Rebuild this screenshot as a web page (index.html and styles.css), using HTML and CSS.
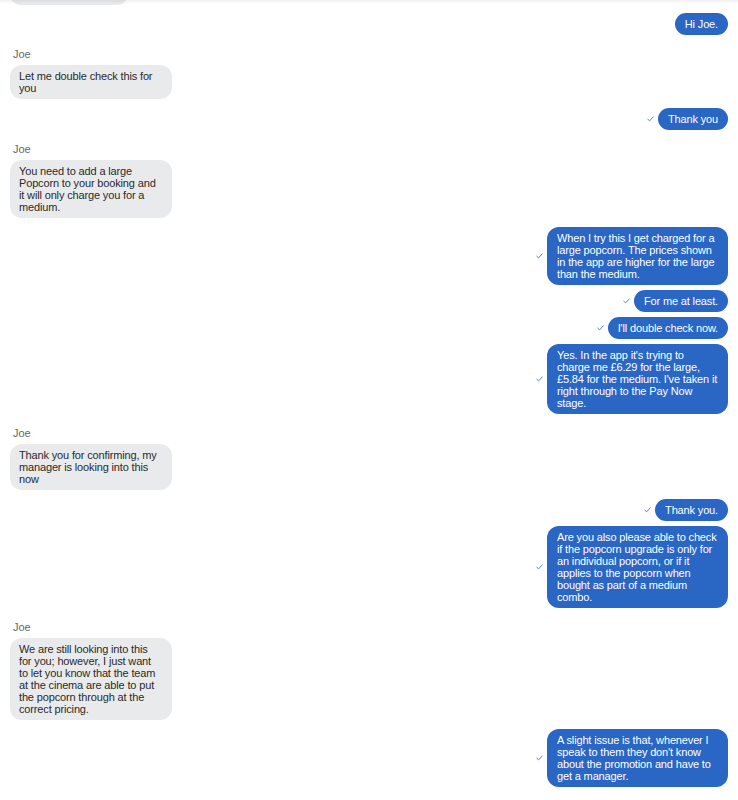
FILE: index.html
```html
<!DOCTYPE html>
<html lang="en">
  <head>
    <meta charset="UTF-8" />
    <meta name="viewport" content="width=device-width, initial-scale=1.0" />
    <title>Chat with Joe</title>
    <link rel="stylesheet" href="styles.css">
  </head>
  <body>
    <div class="chat">
      <div class="messages">
        <!-- earlier message, scrolled out of view: only its bottom edge shows -->
        <div class="group them first">
          <div class="bubble scrolled"></div>
        </div>

        <div class="group me">
          <div class="row"><div class="bubble">Hi Joe.</div></div>
        </div>

        <div class="group them">
          <div class="sender">Joe</div>
          <div class="bubble">Let me double check this for you</div>
        </div>

        <div class="group me">
          <div class="row"><span class="tick"></span><div class="bubble">Thank you</div></div>
        </div>

        <div class="group them">
          <div class="sender">Joe</div>
          <div class="bubble">You need to add a large Popcorn to your booking and it will only charge you for a medium.</div>
        </div>

        <div class="group me">
          <div class="row"><span class="tick"></span><div class="bubble">When I try this I get charged for a large popcorn. The prices shown in the app are higher for the large than the medium.</div></div>
          <div class="row"><span class="tick"></span><div class="bubble">For me at least.</div></div>
          <div class="row"><span class="tick"></span><div class="bubble">I'll double check now.</div></div>
          <div class="row"><span class="tick"></span><div class="bubble">Yes. In the app it's trying to charge me £6.29 for the large, £5.84 for the medium. I've taken it right through to the Pay Now stage.</div></div>
        </div>

        <div class="group them">
          <div class="sender">Joe</div>
          <div class="bubble">Thank you for confirming, my manager is looking into this now</div>
        </div>

        <div class="group me">
          <div class="row"><span class="tick"></span><div class="bubble">Thank you.</div></div>
          <div class="row"><span class="tick"></span><div class="bubble">Are you also please able to check if the popcorn upgrade is only for an individual popcorn, or if it applies to the popcorn when bought as part of a medium combo.</div></div>
        </div>

        <div class="group them">
          <div class="sender">Joe</div>
          <div class="bubble">We are still looking into this for you; however, I just want to let you know that the team at the cinema are able to put the popcorn through at the correct pricing.</div>
        </div>

        <div class="group me">
          <div class="row"><span class="tick"></span><div class="bubble">A slight issue is that, whenever I speak to them they don't know about the promotion and have to get a manager.</div></div>
        </div>
      </div>
    </div>

    <script>
      // draw the little "sent" tick next to each of my messages
      document.querySelectorAll(".tick").forEach(function (el) {
        el.innerHTML =
          '<svg width="7" height="6" viewBox="0 0 7 6"><path d="M0.8 3.2 L2.6 4.9 L6.2 0.9" fill="none" stroke="#5b82c6" stroke-width="1" stroke-linecap="round" stroke-linejoin="round"/></svg>';
      });
    </script>
  </body>
</html>
```

FILE: styles.css
```css
body {
  margin: 0;
  padding: 0;
  background-color: #fff;
  font-family: "Liberation Sans", Arial, sans-serif;
  font-size: 11px;
  color: #222;
}

.chat {
  position: relative;
  height: 800px;
  overflow: hidden;
}

/* faint shadow from the header above the list */
.chat::before {
  content: "";
  position: absolute;
  top: 0;
  left: 0;
  right: 0;
  height: 4px;
  background: linear-gradient(rgba(0, 0, 0, 0.06), rgba(0, 0, 0, 0));
  z-index: 2;
}

.messages {
  display: flex;
  flex-direction: column;
  gap: 9px;
  padding: 0 10px;
  margin-top: -17px;
}

.group {
  display: flex;
  flex-direction: column;
  gap: 5px;
}

.group.first {
  margin-bottom: -1px;
}

.them {
  align-items: flex-start;
}

.me {
  align-items: flex-end;
}

.sender {
  padding: 4px 0 0 3px;
  line-height: 12px;
  font-size: 11px;
  color: #666;
}

.bubble {
  padding: 5px 11px 5px 9px;
  line-height: 12px;
  letter-spacing: -0.15px;
  border-radius: 12px;
  box-sizing: border-box;
}

.them .bubble {
  width: 162px;
  background-color: #e9eaec;
  color: #2a2a2a;
}

.them .bubble.scrolled {
  width: 118px;
  height: 22px;
}

.me .bubble {
  max-width: 181px;
  padding-left: 10px;
  padding-right: 10px;
  background-color: #2a66c4;
  color: #fff;
}

.row {
  display: flex;
  align-items: center;
  gap: 4px;
}

.tick {
  display: flex;
  width: 7px;
  height: 6px;
}
```
